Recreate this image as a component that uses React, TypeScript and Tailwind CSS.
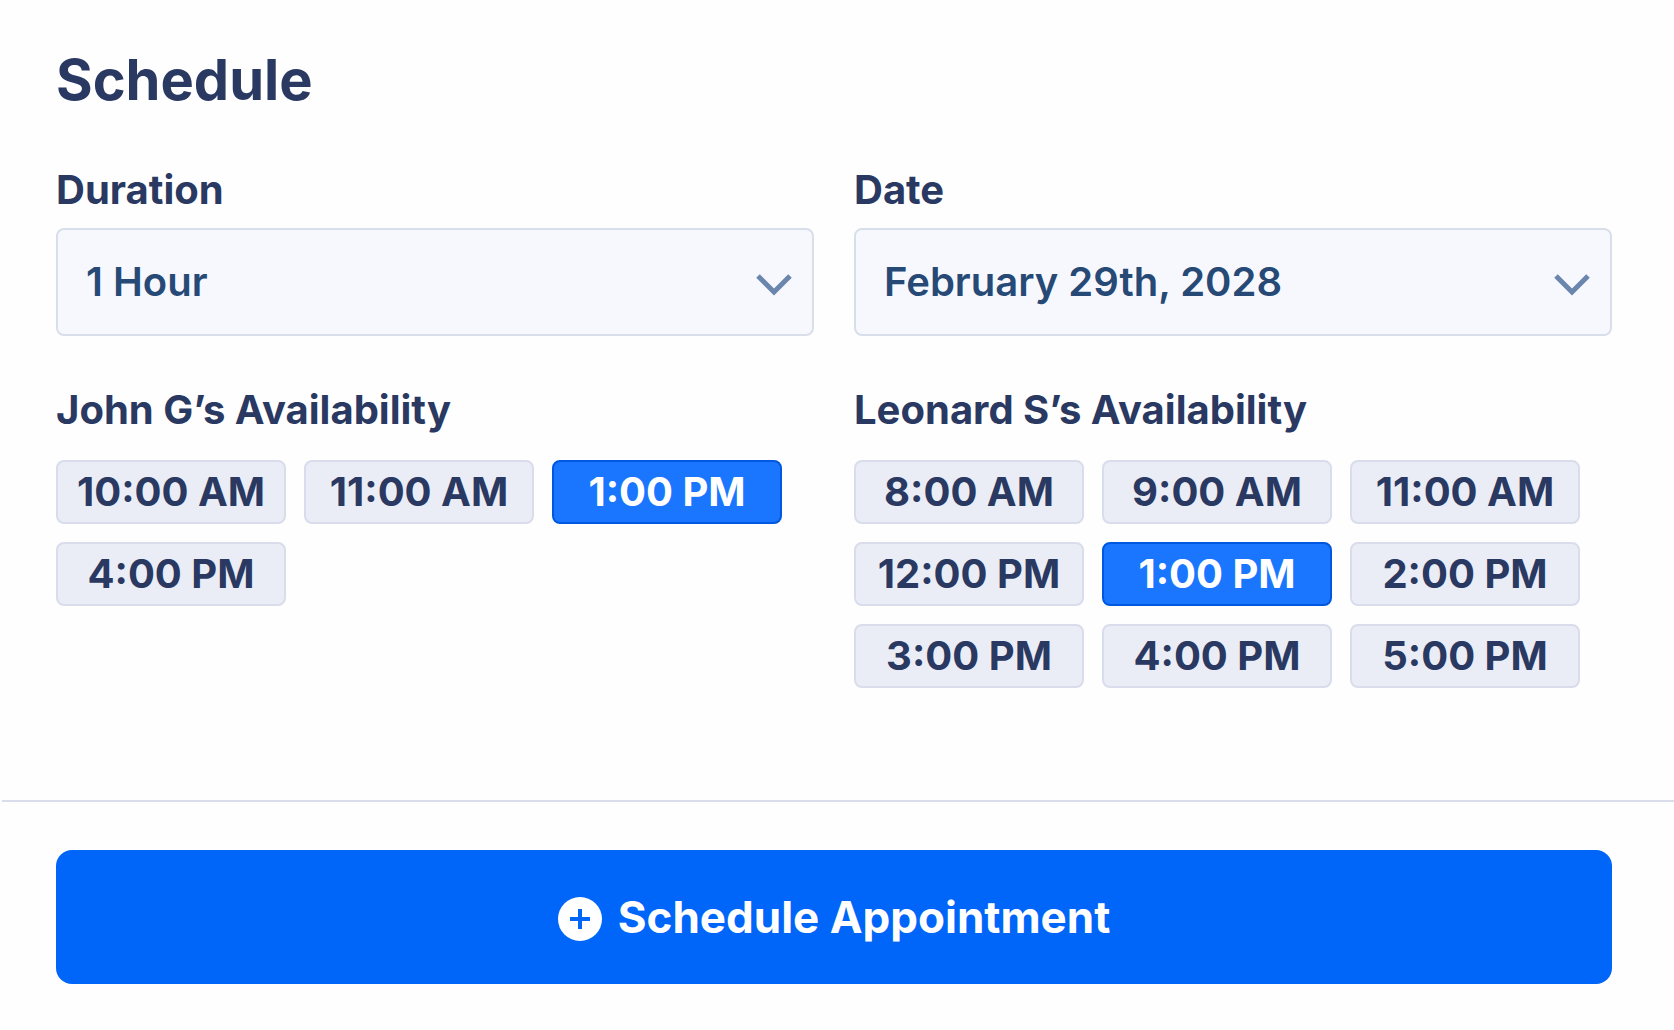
import React, { useState } from "react";

const DURATIONS = ["1 Hour", "2 Hours", "3 Hours"];
const DATES = ["February 29th, 2028", "March 1st, 2028", "March 2nd, 2028"];

const PEOPLE = [
  {
    name: "John G",
    slots: ["10:00 AM", "11:00 AM", "1:00 PM", "4:00 PM"],
  },
  {
    name: "Leonard S",
    slots: [
      "8:00 AM",
      "9:00 AM",
      "11:00 AM",
      "12:00 PM",
      "1:00 PM",
      "2:00 PM",
      "3:00 PM",
      "4:00 PM",
      "5:00 PM",
    ],
  },
];

const SelectField = ({
  id,
  label,
  options,
}: {
  id: string;
  label: string;
  options: string[];
}) => {
  return (
    <div className="flex flex-col gap-[14px]">
      <label htmlFor={id} className="text-[40px] leading-[48px] font-bold">
        {label}
      </label>
      <div className="relative">
        <select
          id={id}
          className="h-[108px] w-full appearance-none rounded-lg border-2 border-[#d8deea] bg-[#f7f8fe] pr-20 pl-7 text-[40px] leading-[48px] font-semibold text-[#264a75]"
        >
          {options.map((option) => (
            <option key={option}>{option}</option>
          ))}
        </select>
        <span className="pointer-events-none absolute inset-y-0 right-[22px] flex items-center text-[#6b86ad]">
          <svg width="36" height="28" viewBox="0 0 36 28" fill="none" aria-hidden="true">
            <path d="M2 8L18 24L34 8" stroke="currentColor" strokeWidth="5" />
          </svg>
        </span>
      </div>
    </div>
  );
};

const Availability = ({
  name,
  slots,
  selected,
  onSelect,
}: {
  name: string;
  slots: string[];
  selected: string;
  onSelect: (slot: string) => void;
}) => {
  return (
    <section>
      <h2 className="text-[40px] leading-[48px] font-bold">
        {name}’s Availability
      </h2>
      <div className="mt-[26px] flex flex-wrap gap-[18px]">
        {slots.map((slot) => (
          <button
            key={slot}
            type="button"
            aria-pressed={slot === selected}
            onClick={() => onSelect(slot)}
            className={
              "h-16 w-[230px] rounded-lg border-2 text-[40px] leading-[48px] font-bold whitespace-nowrap " +
              (slot === selected
                ? "border-[#0057e0] bg-[#1a75ff] text-white"
                : "border-[#d9ddeb] bg-[#ebedf6]")
            }
          >
            {slot}
          </button>
        ))}
      </div>
    </section>
  );
};

const App = () => {
  const [times, setTimes] = useState<Record<string, string>>({
    "John G": "1:00 PM",
    "Leonard S": "1:00 PM",
  });

  return (
    <main className="min-h-screen bg-[#fefefe] font-['Inter',sans-serif] text-[#2a3962]">
      <div className="pt-[46px] pr-[62px] pb-28 pl-14">
        <h1 className="text-[56px] leading-[68px] font-bold">Schedule</h1>
        <div className="mt-[52px] grid grid-cols-2 gap-x-10 gap-y-[50px]">
          <SelectField id="duration" label="Duration" options={DURATIONS} />
          <SelectField id="date" label="Date" options={DATES} />
          {PEOPLE.map((person) => (
            <Availability
              key={person.name}
              name={person.name}
              slots={person.slots}
              selected={times[person.name]}
              onSelect={(slot) => setTimes({ ...times, [person.name]: slot })}
            />
          ))}
        </div>
      </div>
      <footer className="ml-0.5 border-t-2 border-[#d9ddeb] pt-12 pr-[62px] pb-[46px] pl-[54px]">
        <button
          type="button"
          className="flex h-[134px] w-full items-center justify-center gap-4 rounded-2xl bg-[#0065f9] text-[44px] leading-[52px] font-bold text-white"
        >
          <svg width="44" height="48" viewBox="0 0 44 48" fill="none" aria-hidden="true">
            <circle cx="22" cy="26" r="22" fill="currentColor" />
            <path d="M22 16V36M12 26H32" stroke="#0065f9" strokeWidth="4" />
          </svg>
          Schedule Appointment
        </button>
      </footer>
    </main>
  );
};

export default App;
